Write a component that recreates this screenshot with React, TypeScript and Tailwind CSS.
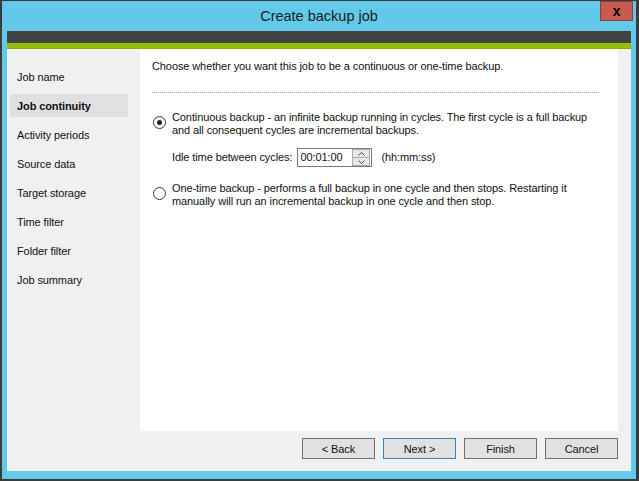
const steps = [
  "Job name",
  "Job continuity",
  "Activity periods",
  "Source data",
  "Target storage",
  "Time filter",
  "Folder filter",
  "Job summary",
];

const Radio = ({ checked }: { checked?: boolean }) => (
  <div className="w-[13px] h-[13px] rounded-full border border-[#333] bg-white flex items-center justify-center shrink-0">
    {checked && <div className="w-[5px] h-[5px] rounded-full bg-[#222]"></div>}
  </div>
);

const Spinner = () => (
  <div className="flex flex-col w-[18px] h-[17px] border border-[#acacac] bg-[#e8e8e8]">
    <div className="flex-1 flex items-center justify-center border-b border-[#acacac]">
      <svg width="7" height="4" viewBox="0 0 7 4">
        <path d="M0.5 3.5 L3.5 0.5 L6.5 3.5" fill="none" stroke="#444" strokeWidth="1" />
      </svg>
    </div>
    <div className="flex-1 flex items-center justify-center">
      <svg width="7" height="4" viewBox="0 0 7 4">
        <path d="M0.5 0.5 L3.5 3.5 L6.5 0.5" fill="none" stroke="#444" strokeWidth="1" />
      </svg>
    </div>
  </div>
);

const Btn = ({ label, primary }: { label: string; primary?: boolean }) => (
  <button
    className={`w-[73px] h-[21px] pt-[1px] bg-[#e1e1e1] border text-[11px] tracking-[-0.1px] text-[#111] ${
      primary ? "border-[#3c7fb1]" : "border-[#707070]"
    }`}
  >
    {label}
  </button>
);

export default function App() {
  return (
    <div
      className="w-[639px] h-[481px] bg-[#3b3b3b] border-l-2 border-t border-r-[3px] border-b-2 border-[#3b3b3b] text-[11px] tracking-[-0.1px] text-[#111]"
      style={{ fontFamily: '"Liberation Sans", Arial, sans-serif' }}
    >
      <div className="h-full bg-[#63c9ea] flex flex-col px-[5px] pb-[8px]">
        {/* title bar */}
        <div className="relative h-[30px] flex items-center justify-center">
          <span className="text-[14.5px] tracking-normal text-[#1b1b1b] leading-none">Create backup job</span>
          <div className="absolute right-[-2px] top-0 w-[33px] h-[20px] bg-[#c75b52] border border-[#8f3f3a] flex items-center justify-center">
            <span className="font-bold text-[14px] leading-none text-black">x</span>
          </div>
        </div>

        <div className="flex-1 flex flex-col bg-[#f0f0f0]">
          <div className="h-[12px] bg-[#434343]"></div>
          <div className="h-[5px] bg-[#97bf0d]"></div>
          <div className="h-[1px] bg-[#8aae0c]"></div>

          <div className="flex-1 flex">
            {/* sidebar */}
            <div className="w-[133px] pt-[16px] pl-[3px] flex flex-col gap-[6px]">
              {steps.map((s, i) => (
                <div
                  key={s}
                  className={`w-[118px] h-[23px] pl-[7px] pt-[2px] flex items-center ${
                    i === 1 ? "bg-[#e0e0e0] font-bold" : ""
                  }`}
                >
                  {s}
                </div>
              ))}
            </div>

            {/* main */}
            <div className="flex-1 flex flex-col pr-[13px]">
              <div className="flex-1 bg-white pl-[12px] pr-[19px] pt-[11px] whitespace-nowrap">
                <p className="leading-[13px]">
                  Choose whether you want this job to be a continuous or one-time backup.
                </p>
                <div className="mt-[19px] border-t border-dotted border-[#a0a0a0]"></div>

                <div className="mt-[18px] flex gap-[6px] pl-[1px]">
                  <div className="pt-[5px]">
                    <Radio checked />
                  </div>
                  <div className="leading-[13px]">
                    <p>Continuous backup - an infinite backup running in cycles. The first cycle is a full backup</p>
                    <p>and all consequent cycles are incremental backups.</p>
                    <div className="mt-[11px] flex items-center">
                      <span>Idle time between cycles:</span>
                      <div className="ml-[5px] w-[75px] h-[19px] border border-[#7a7a7a] bg-white flex items-center justify-between pl-[2px] pr-[1px]">
                        <span>00:01:00</span>
                        <Spinner />
                      </div>
                      <span className="ml-[9px]">(hh:mm:ss)</span>
                    </div>
                  </div>
                </div>

                <div className="mt-[15px] flex gap-[6px] pl-[1px]">
                  <div className="pt-[5px]">
                    <Radio />
                  </div>
                  <div className="leading-[13px]">
                    <p>One-time backup - performs a full backup in one cycle and then stops. Restarting it</p>
                    <p>manually will run an incremental backup in one cycle and then stop.</p>
                  </div>
                </div>
              </div>

              <div className="h-[40px] flex justify-end items-start pt-[7px] gap-[8px]">
                <Btn label="< Back" />
                <Btn label="Next >" primary />
                <Btn label="Finish" />
                <Btn label="Cancel" />
              </div>
            </div>
          </div>
        </div>
      </div>
    </div>
  );
}
